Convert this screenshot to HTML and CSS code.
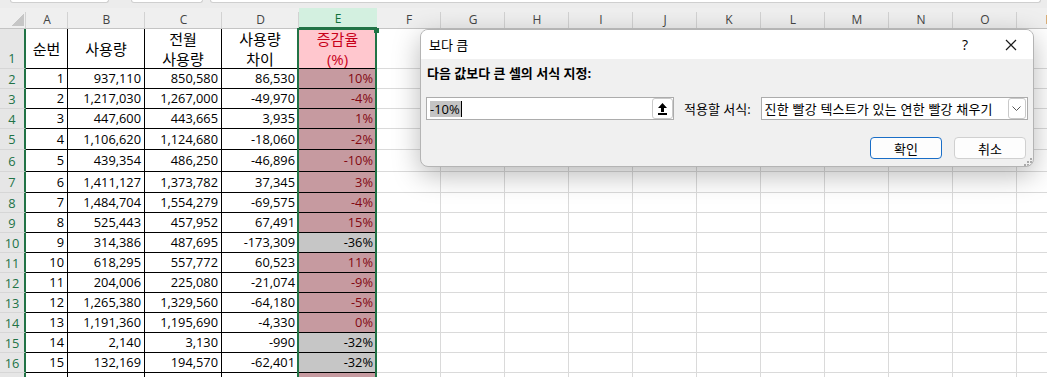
FILE: index.html
```html
<!DOCTYPE html>
<html lang="ko">
  <head>
    <meta charset="UTF-8" />
    <meta name="viewport" content="width=device-width, initial-scale=1.0" />
    <link rel="stylesheet" href="styles.css">
  </head>
  <body>
    <div class="topbar">
      <span class="box namebox"></span>
      <span class="box fxbtns"></span>
      <span class="box fxbar"></span>
    </div>
    <div id="sheet" class="sheet"></div>
    <div class="selection"><span class="handle"></span></div>

    <div class="dialog">
      <div class="dlg-title">
        <span>보다 큼</span>
        <span class="dlg-help">?</span>
        <svg class="dlg-close" width="12" height="12" viewBox="0 0 12 12">
          <path d="M1 1L11 11M11 1L1 11" stroke="#1a1a1a" stroke-width="1.2" />
        </svg>
      </div>
      <div class="dlg-body">
        <div class="dlg-label">다음 값보다 큰 셀의 서식 지정:</div>
        <div class="dlg-row">
          <div class="input">
            <span class="sel-text">-10%</span><span class="caret"></span>
            <span class="ref-btn">
              <svg width="9" height="12" viewBox="0 0 9 12">
                <polygon points="4.5,0 0,5 3,5 3,9 6,9 6,5 9,5" fill="#000" />
                <rect x="0" y="10" width="9" height="2" fill="#000" />
              </svg>
            </span>
          </div>
          <span class="apply-label">적용할 서식:</span>
          <div class="select">
            <span class="select-text">진한 빨강 텍스트가 있는 연한 빨강 채우기</span>
            <span class="drop">
              <svg width="9" height="5" viewBox="0 0 9 5">
                <path d="M0.5 0.5L4.5 4.5L8.5 0.5" stroke="#555" fill="none" />
              </svg>
            </span>
          </div>
        </div>
        <div class="dlg-buttons">
          <button class="btn primary">확인</button>
          <button class="btn">취소</button>
        </div>
      </div>
      <svg class="grip" width="10" height="10" viewBox="0 0 10 10">
        <rect x="8" y="2" width="2" height="2" fill="#aaa" />
        <rect x="5" y="5" width="2" height="2" fill="#aaa" />
        <rect x="8" y="5" width="2" height="2" fill="#aaa" />
        <rect x="2" y="8" width="2" height="2" fill="#aaa" />
        <rect x="5" y="8" width="2" height="2" fill="#aaa" />
        <rect x="8" y="8" width="2" height="2" fill="#aaa" />
      </svg>
    </div>

    <script>
      const letters = "ABCDEFGHIJKLMNOP".split("");
      const rows = [
        [1, "937,110", "850,580", "86,530", "10%"],
        [2, "1,217,030", "1,267,000", "-49,970", "-4%"],
        [3, "447,600", "443,665", "3,935", "1%"],
        [4, "1,106,620", "1,124,680", "-18,060", "-2%"],
        [5, "439,354", "486,250", "-46,896", "-10%"],
        [6, "1,411,127", "1,373,782", "37,345", "3%"],
        [7, "1,484,704", "1,554,279", "-69,575", "-4%"],
        [8, "525,443", "457,952", "67,491", "15%"],
        [9, "314,386", "487,695", "-173,309", "-36%"],
        [10, "618,295", "557,772", "60,523", "11%"],
        [11, "204,006", "225,080", "-21,074", "-9%"],
        [12, "1,265,380", "1,329,560", "-64,180", "-5%"],
        [13, "1,191,360", "1,195,690", "-4,330", "0%"],
        [14, "2,140", "3,130", "-990", "-32%"],
        [15, "132,169", "194,570", "-62,401", "-32%"],
        ["", "", "", "", ""],
      ];
      const sheet = document.getElementById("sheet");

      function cell(cls, html) {
        const div = document.createElement("div");
        div.className = cls;
        div.innerHTML = html;
        sheet.appendChild(div);
      }
      function blanks() {
        for (let i = 0; i < 11; i++) cell("g", "");
      }

      cell("ch corner", "");
      letters.forEach((l) => cell(l === "E" ? "ch on" : "ch", l));

      cell("rh tall", "1");
      cell("c head", "순번");
      cell("c head", "사용량");
      cell("c head", "전월<br>사용량");
      cell("c head", "사용량<br>차이");
      cell("c head e1", "증감율<br>(%)");
      blanks();

      rows.forEach((r, i) => {
        // row 17 only peeks in at the bottom edge, its number stays hidden
        cell("rh", i < 15 ? i + 2 : "");
        for (let j = 0; j < 4; j++) cell("c", r[j]);
        const low = parseInt(r[4], 10) < -10;
        cell(low ? "c grey" : "c pink", r[4]);
        blanks();
      });
    </script>
  </body>
</html>
```

FILE: styles.css
```css
body {
  margin: 0;
  height: 377px;
  overflow: hidden;
  position: relative;
  background-color: #fff;
  font-family: "Open Sans", "Noto Sans CJK KR", sans-serif;
}
.topbar {
  height: 8px;
  display: flex;
  align-items: flex-start;
  background-color: #ececec;
}
.box {
  height: 2px;
  background-color: #fff;
  border: 1px solid #cfcfcf;
  border-top: none;
  border-radius: 0 0 4px 4px;
}
.namebox {
  margin-left: 10px;
  width: 97px;
}
.fxbtns {
  margin-left: 22px;
  width: 70px;
}
.fxbar {
  margin-left: 7px;
  margin-right: 6px;
  flex: 1;
}
.sheet {
  display: grid;
  grid-template-columns: 26px 42px 77px 77px 77px 78px repeat(11, 64px);
  grid-template-rows: 21px 40px 20px 20px 20px 21px 22px 21px repeat(10, 20px);
  width: max-content;
}
.sheet > div {
  box-sizing: border-box;
  white-space: nowrap;
}
.ch {
  display: flex;
  align-items: center;
  justify-content: center;
  padding-top: 2px;
  font-size: 12px;
  color: #444;
  background: linear-gradient(#d2d2d2, #d2d2d2) right bottom / 1px 16px no-repeat, #efefef;
  border-bottom: 1px solid #c4c4c4;
}
.ch.on {
  background: #d3f0e0;
  color: #0f703b;
  border-bottom: 2px solid #217346;
}
.ch.corner {
  background: linear-gradient(135deg, transparent 50%, #c6c6c6 50%) right 2px bottom 2px / 13px 13px no-repeat,
    linear-gradient(#d2d2d2, #d2d2d2) right bottom / 1px 16px no-repeat, #efefef;
}
.rh {
  display: flex;
  align-items: center;
  justify-content: center;
  font-size: 12.8px;
  color: #217346;
  background-color: #e6e6e6;
  border-right: 2px solid #217346;
  border-bottom: 1px solid #d6d6d6;
}
.rh.tall {
  align-items: flex-end;
  padding-bottom: 1px;
}
.c {
  display: flex;
  align-items: center;
  justify-content: flex-end;
  padding-right: 3px;
  font-size: 12.8px;
  line-height: 19px;
  color: #000;
  border-right: 1px solid #000;
  border-bottom: 1px solid #000;
}
.c.head {
  justify-content: center;
  text-align: center;
  padding: 0;
  font-size: 15px;
  line-height: 20px;
}
.c.e1 {
  background-color: #ffc7ce;
  color: #c8001a;
}
.c.pink {
  background-color: #c69aa0;
  color: #820812;
}
.c.grey {
  background-color: #c6c6c6;
}
.g {
  border-right: 1px solid #dadada;
  border-bottom: 1px solid #dadada;
}
.selection {
  position: absolute;
  left: 297px;
  top: 28px;
  width: 80px;
  height: 360px;
  box-sizing: border-box;
  border: 2px solid #217346;
}
.handle {
  position: absolute;
  right: -4px;
  top: -2px;
  width: 5px;
  height: 5px;
  background-color: #217346;
}
.dialog {
  position: absolute;
  left: 420px;
  top: 29px;
  width: 614px;
  height: 138px;
  box-sizing: border-box;
  display: flex;
  flex-direction: column;
  border: 1px solid #b4b4b4;
  border-radius: 8px;
  overflow: hidden;
  background-color: #f0f0f0;
  box-shadow: 0 8px 28px rgba(0, 0, 0, 0.28);
  font-size: 13px;
  color: #000;
}
.dlg-title {
  height: 29px;
  display: flex;
  align-items: center;
  padding-left: 8px;
  background-color: #fff;
}
.dlg-help {
  margin-left: auto;
  margin-right: 37px;
  font-size: 14px;
}
.dlg-close {
  margin-right: 16px;
}
.dlg-body {
  padding: 6px 5px 0 5px;
}
.dlg-label {
  padding-left: 1px;
  font-weight: bold;
  line-height: 16px;
}
.dlg-row {
  margin-top: 16px;
  display: flex;
  align-items: center;
}
.input {
  width: 248px;
  height: 23px;
  box-sizing: border-box;
  display: flex;
  align-items: center;
  padding-left: 3px;
  border: 1px solid #acacac;
  background-color: #fff;
}
.sel-text {
  background-color: #c4c4c4;
  line-height: 16px;
  padding-right: 1px;
}
.caret {
  width: 1px;
  height: 16px;
  background-color: #000;
}
.ref-btn {
  margin-left: auto;
  width: 21px;
  height: 21px;
  box-sizing: border-box;
  display: flex;
  align-items: center;
  justify-content: center;
  border: 1px solid #c9c9c9;
  border-radius: 3px;
  background-color: #fff;
}
.apply-label {
  margin: 0 10px;
}
.select {
  width: 267px;
  height: 23px;
  box-sizing: border-box;
  display: flex;
  align-items: center;
  padding-left: 3px;
  border: 1px solid #acacac;
  background-color: #fff;
}
.select-text {
  font-size: 13px;
  letter-spacing: 0.2px;
}
.drop {
  margin-left: auto;
  margin-right: 1px;
  width: 18px;
  height: 21px;
  box-sizing: border-box;
  display: flex;
  align-items: center;
  justify-content: center;
  border: 1px solid #c9c9c9;
  border-radius: 3px;
}
.dlg-buttons {
  margin-top: 17px;
  margin-right: 2px;
  display: flex;
  justify-content: flex-end;
  gap: 12px;
}
.btn {
  width: 72px;
  height: 22px;
  padding: 0;
  font-family: inherit;
  font-size: 13px;
  color: #000;
  background-color: #fdfdfd;
  border: 1px solid #d0d0d0;
  border-radius: 4px;
}
.btn.primary {
  border-color: #1a6ec7;
}
.grip {
  position: absolute;
  right: 1px;
  bottom: 0;
}
```
